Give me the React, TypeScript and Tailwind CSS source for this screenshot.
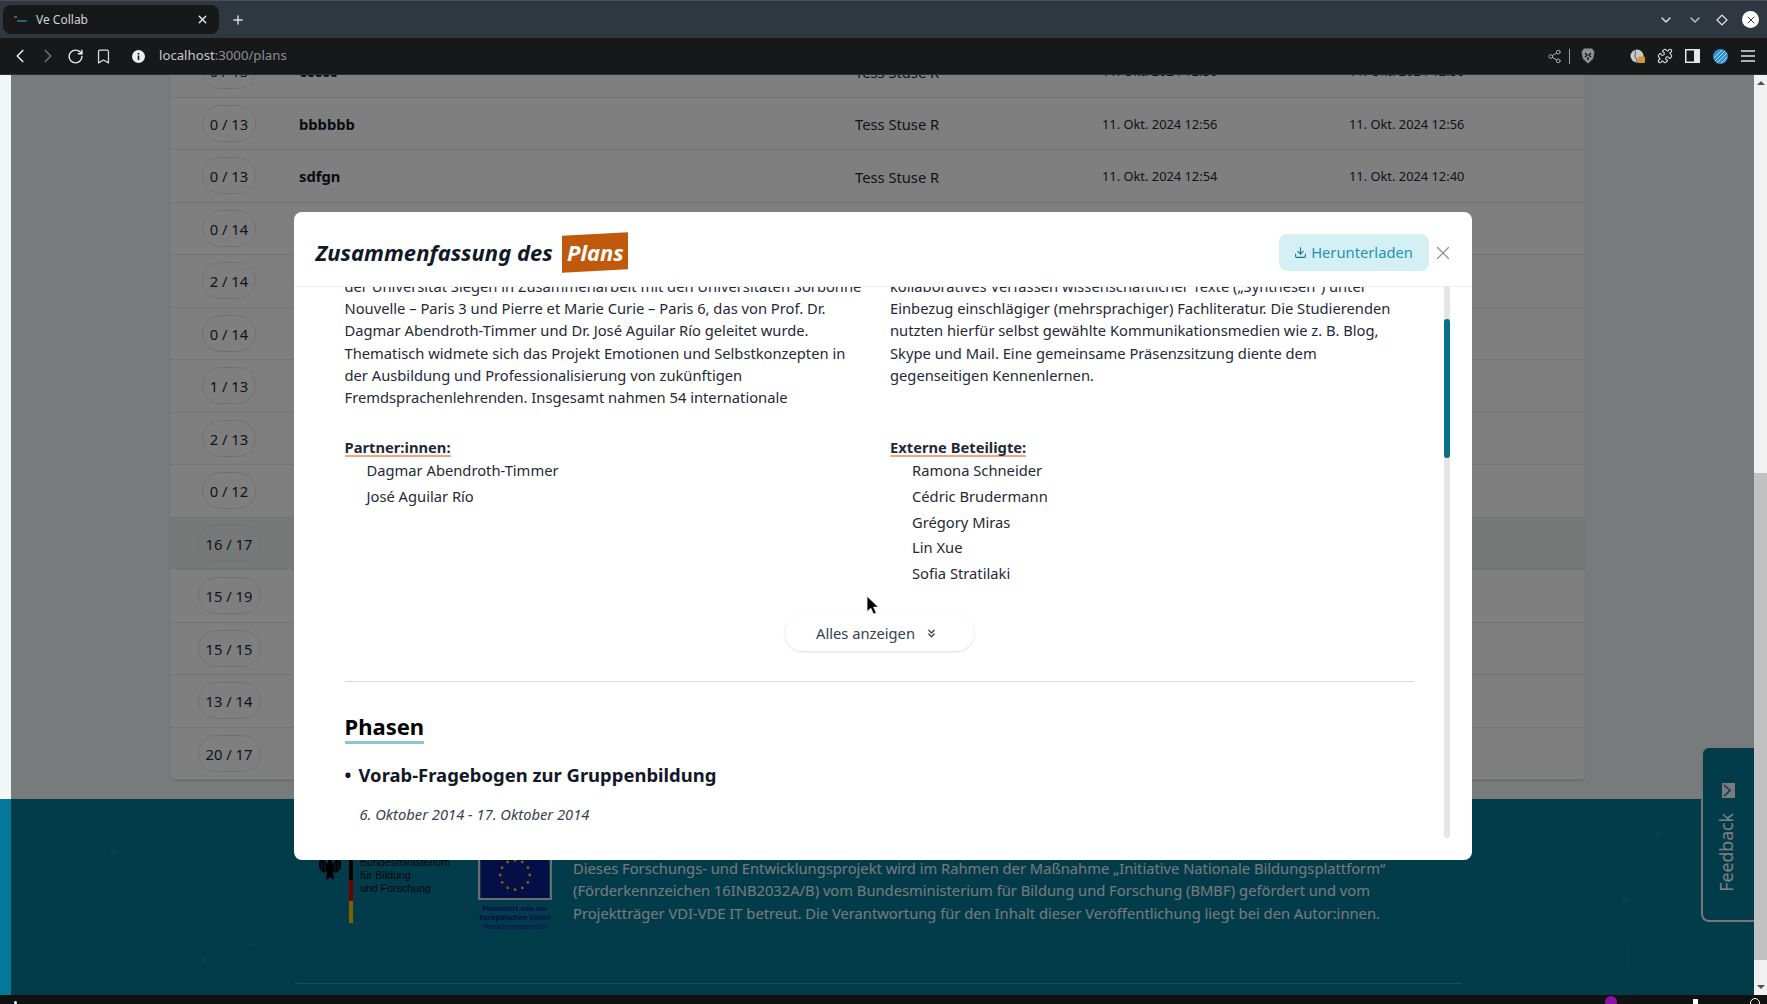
import React from "react";
import { ChevronDown, ChevronLeft, ChevronRight, ChevronsDown, Bookmark, Download, Plus, Puzzle, RotateCw, Share2, X } from "lucide-react";

const rows = [
  ["0 / 13", "ccccc", "Tess Stuse R", "11. Okt. 2024 12:56", "11. Okt. 2024 12:56"],
  ["0 / 13", "bbbbbb", "Tess Stuse R", "11. Okt. 2024 12:56", "11. Okt. 2024 12:56"],
  ["0 / 13", "sdfgn", "Tess Stuse R", "11. Okt. 2024 12:54", "11. Okt. 2024 12:40"],
  ["0 / 14", "", "", "", ""],
  ["2 / 14", "", "", "", ""],
  ["0 / 14", "", "", "", ""],
  ["1 / 13", "", "", "", ""],
  ["2 / 13", "", "", "", ""],
  ["0 / 12", "", "", "", ""],
  ["16 / 17", "", "", "", ""],
  ["15 / 19", "", "", "", ""],
  ["15 / 15", "", "", "", ""],
  ["13 / 14", "", "", "", ""],
  ["20 / 17", "", "", "", ""],
];

const leftLines = [
  "der Universität Siegen in Zusammenarbeit mit den Universitäten Sorbonne",
  "Nouvelle – Paris 3 und Pierre et Marie Curie – Paris 6, das von Prof. Dr.",
  "Dagmar Abendroth-Timmer und Dr. José Aguilar Río geleitet wurde.",
  "Thematisch widmete sich das Projekt Emotionen und Selbstkonzepten in",
  "der Ausbildung und Professionalisierung von zukünftigen",
  "Fremdsprachenlehrenden. Insgesamt nahmen 54 internationale",
];
const rightLines = [
  "kollaboratives Verfassen wissenschaftlicher Texte („Synthesen“) unter",
  "Einbezug einschlägiger (mehrsprachiger) Fachliteratur. Die Studierenden",
  "nutzten hierfür selbst gewählte Kommunikationsmedien wie z. B. Blog,",
  "Skype und Mail. Eine gemeinsame Präsenzsitzung diente dem",
  "gegenseitigen Kennenlernen.",
];

function BrowserChrome() {
  return (
    <div className="shrink-0">
      <div className="h-[38px] bg-[#2f3840] border-t border-[#4b4d58] flex items-center pl-[3px] pr-[8px]">
        <div className="w-[216px] h-[29px] rounded-lg bg-[#17181a] flex items-center pl-[11px] pr-[10px]">
          <svg width="14" height="10" viewBox="0 0 14 10" className="shrink-0">
            <rect x="0" y="1" width="3" height="2" fill="#8a4a2a" />
            <rect x="3" y="5" width="10" height="2" fill="#1f6373" />
          </svg>
          <span className="ml-[8px] text-[12px] text-[#cfd2d5] flex-1">Ve Collab</span>
          <X size={13} strokeWidth={2.5} className="text-[#e4e6e8]" />
        </div>
        <Plus size={14} strokeWidth={2.5} className="ml-[12px] text-[#d9dcdf]" />
        <div className="flex-1" />
        <ChevronDown size={16} strokeWidth={2} className="text-[#e3e6e8] mr-[13px]" />
        <ChevronDown size={16} strokeWidth={2} className="text-[#c2c6ca] mr-[13px]" />
        <svg width="12" height="12" viewBox="0 0 12 12" className="mr-[14px]">
          <rect x="2.5" y="2.5" width="7" height="7" transform="rotate(45 6 6)" fill="none" stroke="#dfe2e4" strokeWidth="1.3" />
        </svg>
        <div className="w-[17px] h-[17px] rounded-full bg-white flex items-center justify-center">
          <X size={12} strokeWidth={2} className="text-[#30383f]" />
        </div>
      </div>
      <div className="h-[37px] bg-[#17181a] flex items-center pl-[9px] pr-[12px] border-b border-[#2c2e30]">
        <ChevronLeft size={22} strokeWidth={1.8} className="text-[#e4e6e8]" />
        <ChevronRight size={22} strokeWidth={1.8} className="ml-[6px] text-[#6c7074]" />
        <RotateCw size={17} strokeWidth={2} className="ml-[8px] text-[#e8eaec]" />
        <Bookmark size={17} strokeWidth={1.8} className="ml-[11px] text-[#d7dadc]" />
        <svg width="13" height="13" viewBox="0 0 13 13" className="ml-[20px]">
          <circle cx="6.5" cy="6.5" r="6.5" fill="#eceeef" />
          <rect x="5.7" y="5.5" width="1.6" height="4.5" fill="#17181a" />
          <rect x="5.7" y="3" width="1.6" height="1.6" fill="#17181a" />
        </svg>
        <span className="ml-[14px] text-[13.2px] text-[#c6cbd0]">localhost<span className="text-[#8b9095]">:3000/plans</span></span>
        <div className="flex-1" />
        <Share2 size={15} strokeWidth={1.6} className="text-[#a7abaf]" />
        <div className="w-px h-[15px] bg-[#9a9da0] ml-[7px]" />
        <svg width="14" height="16" viewBox="0 0 14 16" className="ml-[11px]">
          <path d="M3 0.5 H11 L13.5 4 L12 11 L7 15.5 L2 11 L0.5 4 Z" fill="#8d9094" />
          <path d="M4 5 L6 7 L4 9 M10 5 L8 7 L10 9 M7 9 V12" fill="none" stroke="#17181a" strokeWidth="1.4" />
        </svg>
        <svg width="15" height="15" viewBox="0 0 15 15" className="ml-[35px]">
          <circle cx="7" cy="7" r="6.5" fill="#c9cbc9" />
          <path d="M5 1 C7 4 3 7 6 9 C8 11 6 13 7 14" fill="none" stroke="#6f6f6f" strokeWidth="1.2" />
          <rect x="8" y="7.5" width="7" height="6.5" rx="1" fill="#d9952e" />
        </svg>
        <Puzzle size={16} strokeWidth={1.6} className="ml-[12px] text-[#dfe1e3]" />
        <svg width="15" height="14" viewBox="0 0 15 14" className="ml-[12px]">
          <rect x="0.75" y="0.75" width="13.5" height="12.5" fill="none" stroke="#e5e7e8" strokeWidth="1.5" />
          <rect x="9" y="0.75" width="5.25" height="12.5" fill="#e5e7e8" />
        </svg>
        <svg width="15" height="15" viewBox="0 0 15 15" className="ml-[13px]">
          <circle cx="7.5" cy="7.5" r="7.5" fill="#2f8fd3" />
          <path d="M1 9 L9 1 M2 12 L12 2 M4 14 L14 4 M8 14 L14 8" stroke="#b5dcf2" strokeWidth="1" />
        </svg>
        <svg width="14" height="12" viewBox="0 0 14 12" className="ml-[13px]">
          <path d="M0 1 H14 M0 6 H14 M0 11 H14" stroke="#dfe1e3" strokeWidth="1.5" />
        </svg>
      </div>
    </div>
  );
}

function Row({ r, active }: { r: string[]; active: boolean }) {
  return (
    <div className={`h-[52.5px] flex items-center border-b border-[#e6e8e8] ${active ? "bg-[#eef2f2]" : "bg-white"}`}>
      <div className="w-[129px] flex justify-center pr-[11px]">
        <div className={`h-[37px] rounded-full border border-[#e2e4e4] flex items-center justify-center text-[14.72px] text-[#1f2937] pt-[1px] ${r[0].length > 6 ? "w-[63px]" : "w-[54px]"}`}>{r[0]}</div>
      </div>
      <div className="w-[556px] text-[14.72px] font-bold text-[#111827] pt-[1px]">{r[1]}</div>
      <div className="w-[247px] text-[14.72px] text-[#1f2937] pt-[2px]">{r[2]}</div>
      <div className="w-[247px] text-[12.85px] text-[#1f2937] pt-[2px]">{r[3]}</div>
      <div className="flex-1 text-[12.85px] text-[#1f2937] pt-[2px]">{r[4]}</div>
    </div>
  );
}

function Footer() {
  return (
    <footer className="relative h-[196px] shrink-0 bg-[#047896] flex flex-col pt-[56px] overflow-hidden">
      <svg className="absolute inset-0 w-full h-full" viewBox="0 0 1754 196">
        <g fill="#0c8199" stroke="#0c8199">
          <circle cx="114" cy="52" r="3" />
          <circle cx="204" cy="161" r="3" />
          <circle cx="255" cy="145" r="3" />
          <line x1="204" y1="161" x2="255" y2="145" strokeWidth="0.6" />
          <circle cx="1658" cy="34" r="3" />
          <circle cx="1625" cy="102" r="3" />
          <line x1="1625" y1="102" x2="1630" y2="196" strokeWidth="0.6" />
        </g>
      </svg>
      <div className="relative flex ml-[318px]">
        <div className="w-[160px] flex">
          <svg width="24" height="26" viewBox="0 0 24 26" className="shrink-0">
            <path d="M12 3 C13.5 3 14 5 14 7 L15 9 C16 5 20 4 23 6 C24 11 22 16 18 18 L15 16 L16 25 L12 22 L8 25 L9 16 L6 18 C2 16 0 11 1 6 C4 4 8 5 9 9 L10 7 C10 5 10.5 3 12 3 Z" fill="#000" />
            <path d="M4 7 V15 M7 7 V16 M17 7 V16 M20 7 V15" stroke="#047896" strokeWidth="0.7" />
          </svg>
          <div className="ml-[7px] w-[4px] h-[68px] flex flex-col shrink-0">
            <div className="h-[25px] bg-black" />
            <div className="h-[21px] bg-[#d00]" />
            <div className="h-[22px] bg-[#f5c400]" />
          </div>
          <div className="ml-[7px] font-['Liberation_Sans',sans-serif] text-[10.6px] leading-[13px] text-[#0a0a0a] mt-[1px]">Bundesministerium<br />für Bildung<br />und Forschung</div>
        </div>
        <div className="w-[95px] flex flex-col -mt-[5px]">
          <svg width="74" height="50" viewBox="0 0 74 50" className="shrink-0 border-2 border-[#d5dbe6]">
            <rect width="74" height="50" fill="#0a1f8f" />
            <g fill="#ffcc00">
              <circle cx="37" cy="9" r="1.5" /><circle cx="45" cy="11" r="1.5" /><circle cx="29" cy="11" r="1.5" />
              <circle cx="51" cy="17" r="1.5" /><circle cx="23" cy="17" r="1.5" /><circle cx="53" cy="25" r="1.5" />
              <circle cx="21" cy="25" r="1.5" /><circle cx="51" cy="33" r="1.5" /><circle cx="23" cy="33" r="1.5" />
              <circle cx="45" cy="39" r="1.5" /><circle cx="29" cy="39" r="1.5" /><circle cx="37" cy="41" r="1.5" />
            </g>
          </svg>
          <div className="mt-[4px] w-[80px] -ml-[3px] text-center text-[7.2px] leading-[9px] font-bold text-[#08188f] whitespace-nowrap">Finanziert von der<br />Europäischen Union<br /><span className="font-normal">NextGenerationEU</span></div>
        </div>
        <div className="mt-[2px] text-[14.72px] leading-[22.4px] text-[#eef5f7] whitespace-nowrap">
          Dieses Forschungs- und Entwicklungsprojekt wird im Rahmen der Maßnahme „Initiative Nationale Bildungsplattform“<br />
          (Förderkennzeichen 16INB2032A/B) vom Bundesministerium für Bildung und Forschung (BMBF) gefördert und vom<br />
          Projektträger VDI-VDE IT betreut. Die Verantwortung für den Inhalt dieser Veröffentlichung liegt bei den Autor:innen.
        </div>
      </div>
      <div className="relative mt-auto mb-[11px] ml-[295px] mr-[292px] h-px bg-[#3f93a8]" />
    </footer>
  );
}

function Modal() {
  return (
    <div className="w-[1178px] h-[648px] bg-white rounded-lg flex flex-col relative overflow-hidden">
      <div className="h-[75px] shrink-0 flex items-center pl-[22px] pr-[18px] border-b border-[#eeeeee] pt-[7px]">
        <span className="text-[22px] font-bold italic text-[#111827]">Zusammenfassung des</span>
        <span className="ml-[9px] w-[66px] h-[37px] bg-[#c0590c] -skew-y-3 flex items-center justify-center">
          <span className="skew-y-3 text-[22px] font-bold italic text-white">Plans</span>
        </span>
        <div className="flex-1" />
        <button className="w-[150px] h-[37px] rounded-lg bg-[#d5f0f5] flex items-center justify-center gap-[4px] text-[14.72px] text-[#1e93b2]">
          <Download size={13} strokeWidth={2} className="text-[#15758e]" />
          Herunterladen
        </button>
        <X size={22} strokeWidth={1.2} className="ml-[3px] text-[#8a8a8a]" />
      </div>
      <div className="flex-1 overflow-hidden pl-[51px] pr-[58px]">
        <div className="-mt-[12px] grid grid-cols-2 gap-x-[22px] text-[14.72px] leading-[22.2px] text-[#1f2937]">
          <div>
            {leftLines.map((l) => <div key={l} className="whitespace-nowrap">{l}</div>)}
          </div>
          <div>
            {rightLines.map((l) => <div key={l} className="whitespace-nowrap">{l}</div>)}
          </div>
          <div className="mt-[31px]">
            <span className="block w-fit leading-[16px] font-bold border-b-2 border-[#f3a57c]">Partner:innen:</span>
            <ul className="ml-[22px] mt-[1px] leading-[25.7px]">
              <li>Dagmar Abendroth-Timmer</li>
              <li>José Aguilar Río</li>
            </ul>
          </div>
          <div className="mt-[31px]">
            <span className="block w-fit leading-[16px] font-bold border-b-2 border-[#f3a57c]">Externe Beteiligte:</span>
            <ul className="ml-[22px] mt-[1px] leading-[25.7px]">
              <li>Ramona Schneider</li>
              <li>Cédric Brudermann</li>
              <li>Grégory Miras</li>
              <li>Lin Xue</li>
              <li>Sofia Stratilaki</li>
            </ul>
          </div>
        </div>
        <div className="mt-[28px] flex justify-center">
          <button className="w-[189px] h-[36px] rounded-full bg-white shadow-[0_1px_3px_rgba(0,0,0,0.14)] flex items-center justify-center gap-[10px] pr-[4px] text-[14.72px] text-[#374151]">
            Alles anzeigen
            <ChevronsDown size={13} strokeWidth={2.4} className="mt-[2px]" />
          </button>
        </div>
        <div className="mt-[30px] h-px bg-[#d9d9d9]" />
        <h2 className="mt-[29px] text-[22px] leading-[30px] font-bold text-black"><span className="border-b-[3px] border-[#8cc6d2]">Phasen</span></h2>
        <div className="mt-[20px] flex items-center text-[18.46px] leading-[28px] font-bold text-[#111827]">
          <span className="w-[14px] text-[18px]">•</span>Vorab-Fragebogen zur Gruppenbildung
        </div>
        <div className="mt-[14px] ml-[15px] text-[14.72px] italic text-[#374151]">6. Oktober 2014 - 17. Oktober 2014</div>
      </div>
      <div className="absolute left-[1150px] top-[74px] w-[6px] h-[552px] rounded-full bg-[#e5e5e5]">
        <div className="mt-[33px] h-[139px] rounded-full bg-[#05708a]" />
      </div>
    </div>
  );
}

export default function App() {
  return (
    <div className="w-[1767px] h-[1004px] overflow-hidden flex flex-col bg-[#111] font-['Noto_Sans',sans-serif]">
      <BrowserChrome />
      <main className="relative h-[920px] shrink-0 flex overflow-hidden">
        <div className="flex-1 flex flex-col bg-[#f1f6f7]">
          <div className="flex-1 overflow-hidden pl-[170px] pr-[169px]">
            <div className="-mt-[30px] rounded-b-md overflow-hidden shadow-[0_1px_2px_rgba(0,0,0,0.15)]">
              {rows.map((r, i) => <Row key={i} r={r} active={r[0] === "16 / 17"} />)}
            </div>
          </div>
          <Footer />
        </div>
        <div className="w-[13px] shrink-0 bg-[#f1f1f1] flex flex-col items-center">
          <div className="h-[16px] flex items-center justify-center">
            <div className="w-0 h-0 border-x-[4px] border-x-transparent border-b-[4px] border-b-[#505050]" />
          </div>
          <div className="mt-[382px] w-full h-[487px] bg-[#c1c1c1]" />
          <div className="mt-auto h-[16px] flex items-center justify-center">
            <div className="w-0 h-0 border-x-[4px] border-x-transparent border-t-[4px] border-t-[#505050]" />
          </div>
        </div>
        <div className="absolute right-[13px] top-[671px] w-[53px] h-[176px] bg-[#047896] rounded-l-lg border-2 border-r-0 border-[#e8eef0] flex flex-col items-center">
          <svg width="13" height="15" viewBox="0 0 13 15" className="mt-[35px] shrink-0">
            <rect width="13" height="15" fill="#f1f5f6" />
            <path d="M2 2 L8 7.5 L2 13" fill="none" stroke="#047896" strokeWidth="1.5" />
          </svg>
          <span className="mt-[15px] mr-[4px] text-[17.7px] text-white [writing-mode:vertical-rl] rotate-180">Feedback</span>
        </div>
        <div className="absolute left-[11px] right-[13px] top-0 bottom-0 bg-black/50 flex items-center justify-center pt-[2px]">
          <Modal />
        </div>
        <svg width="14" height="21" viewBox="0 0 13 19" className="absolute left-[866px] top-[520px]">
          <path d="M1 1 L1 15 L4.5 12 L7 17.5 L9.5 16.5 L7 11 L11.5 11 Z" fill="#000" stroke="#fff" strokeWidth="0.6" />
        </svg>
      </main>
      <div className="flex-1 relative overflow-hidden">
        <div className="absolute left-[14px] top-[6px] w-[3px] h-[3px] bg-white rounded-full" />
        <div className="absolute left-[1605px] top-[1px] w-[12px] h-[12px] bg-[#8a12a8] rounded-full" />
        <div className="absolute left-[1693px] top-[4px] w-[5px] h-[5px] bg-white" />
        <div className="absolute left-[1750px] top-[3px] w-[10px] h-[10px] border border-white rounded-full" />
      </div>
    </div>
  );
}
